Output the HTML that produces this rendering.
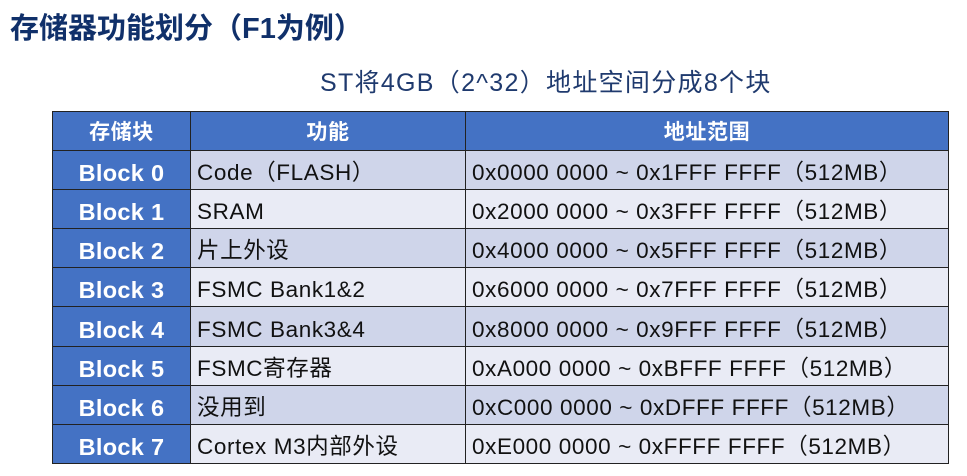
<!DOCTYPE html>
<html><head><meta charset="utf-8"><style>
body{margin:0;width:967px;height:476px;background:#fff;font-family:"Liberation Sans","Noto Sans CJK SC",sans-serif;position:relative;overflow:hidden}
.t{position:absolute;left:10px;top:5px;font-size:29px;font-weight:bold;color:#10306a;white-space:nowrap}
.s{position:absolute;left:320px;top:63px;font-size:25px;color:#1f3a6e;white-space:nowrap;letter-spacing:1.3px}
table{position:absolute;left:52px;top:111px;border-collapse:collapse;table-layout:fixed}
tr{height:39.1px}
td{border:1.5px solid #222;height:39.1px;padding:6px 0 0 6px;box-sizing:border-box;font-size:22.5px;color:#111;white-space:nowrap;line-height:32px;overflow:hidden;letter-spacing:0.6px}
tr.h td{background:#4472C4;color:#fff;font-weight:bold;text-align:center;font-size:21px;padding:3px 0 0 0}
td.b{background:#4472C4;color:#fff;font-weight:bold;text-align:center;padding:6px 0 0 0!important;font-size:23.5px;letter-spacing:0.3px}
tr.o td:not(.b){background:#CFD5EA}
tr.e td:not(.b){background:#E9EBF5}
</style></head><body>
<div class="t">存储器功能划分（F1为例）</div>
<div class="s">ST将4GB（2^32）地址空间分成8个块</div>
<table>
<colgroup><col style="width:138px"><col style="width:275px"><col style="width:483px"></colgroup>
<tr class="h"><td>存储块</td><td>功能</td><td>地址范围</td></tr>
<tr class="o"><td class="b">Block 0</td><td>Code（FLASH）</td><td>0x0000 0000 ~ 0x1FFF FFFF（512MB）</td></tr>
<tr class="e"><td class="b">Block 1</td><td>SRAM</td><td>0x2000 0000 ~ 0x3FFF FFFF（512MB）</td></tr>
<tr class="o"><td class="b">Block 2</td><td>片上外设</td><td>0x4000 0000 ~ 0x5FFF FFFF（512MB）</td></tr>
<tr class="e"><td class="b">Block 3</td><td>FSMC Bank1&amp;2</td><td>0x6000 0000 ~ 0x7FFF FFFF（512MB）</td></tr>
<tr class="o"><td class="b">Block 4</td><td>FSMC Bank3&amp;4</td><td>0x8000 0000 ~ 0x9FFF FFFF（512MB）</td></tr>
<tr class="e"><td class="b">Block 5</td><td>FSMC寄存器</td><td>0xA000 0000 ~ 0xBFFF FFFF（512MB）</td></tr>
<tr class="o"><td class="b">Block 6</td><td>没用到</td><td>0xC000 0000 ~ 0xDFFF FFFF（512MB）</td></tr>
<tr class="e"><td class="b">Block 7</td><td>Cortex M3内部外设</td><td>0xE000 0000 ~ 0xFFFF FFFF（512MB）</td></tr>
</table>
</body></html>
